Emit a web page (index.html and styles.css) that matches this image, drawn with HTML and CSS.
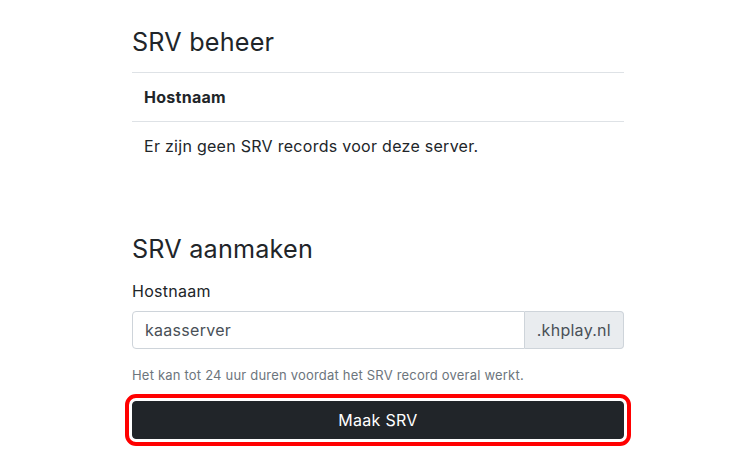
FILE: index.html
```html
<!DOCTYPE html>
<html lang="nl">
<head>
  <meta charset="UTF-8" />
  <title>SRV beheer</title>
  <meta name="viewport" content="width=device-width, initial-scale=1.0">
  <link rel="stylesheet" href="styles.css">
</head>
<body>
  <main class="page">
    <h3 class="title">SRV beheer</h3>
    <table class="srv-table">
      <thead>
        <tr><th>Hostnaam</th></tr>
      </thead>
      <tbody>
        <tr><td>Er zijn geen SRV records voor deze server.</td></tr>
      </tbody>
    </table>

    <h3 class="title title-create">SRV aanmaken</h3>
    <form class="srv-form" onsubmit="return false;">
      <label for="hostname" class="form-label">Hostnaam</label>
      <div class="input-group">
        <input type="text" id="hostname" class="form-control" value="kaasserver">
        <span class="input-addon">.khplay.nl</span>
      </div>
      <div class="form-text">Het kan tot 24 uur duren voordat het SRV record overal werkt.</div>
      <button type="submit" class="btn-dark">Maak SRV</button>
    </form>
  </main>
</body>
</html>
```

FILE: styles.css
```css
body {
  margin: 0;
  font-family: 'Inter', 'Liberation Sans', sans-serif;
  font-size: 16px;
  line-height: 1.5;
  letter-spacing: 0.28px;
  color: #212529;
  background: #fff;
}
.page {
  width: 492px;
  padding: 27px 0 20px 132px;
}
.title {
  margin: 0 0 15px;
  font-size: 25.2px;
  font-weight: 400;
  line-height: 1.2;
  letter-spacing: 0.2px;
}
.title-create {
  margin-top: 64px;
}
.srv-table {
  width: 100%;
  border-collapse: collapse;
  margin-bottom: 16px;
}
.srv-table th,
.srv-table td {
  padding: 12px;
  text-align: left;
  border-top: 1px solid #dee2e6;
}
.srv-table th {
  font-weight: 700;
}
.form-label {
  display: block;
  margin-bottom: 8px;
}
.input-group {
  display: flex;
}
.form-control {
  flex: 1;
  min-width: 0;
  height: 38px;
  padding: 6px 12px;
  font: inherit;
  letter-spacing: inherit;
  color: #495057;
  border: 1px solid #ced4da;
  border-radius: 4px 0 0 4px;
  box-sizing: border-box;
}
.input-addon {
  display: flex;
  align-items: center;
  padding: 6px 12px;
  color: #495057;
  background: #e9ecef;
  border: 1px solid #ced4da;
  border-left: none;
  border-radius: 0 4px 4px 0;
}
.form-text {
  margin: 17px 0 15px;
  font-size: 13px;
  letter-spacing: 0.2px;
  color: #6c757d;
}
.btn-dark {
  display: block;
  width: 100%;
  height: 38px;
  padding: 6px 12px;
  font: inherit;
  letter-spacing: inherit;
  color: #fff;
  background: #212529;
  border: 1px solid #212529;
  border-radius: 4px;
  outline: 4px solid #ff0000;
  outline-offset: 3px;
  cursor: pointer;
}
```
